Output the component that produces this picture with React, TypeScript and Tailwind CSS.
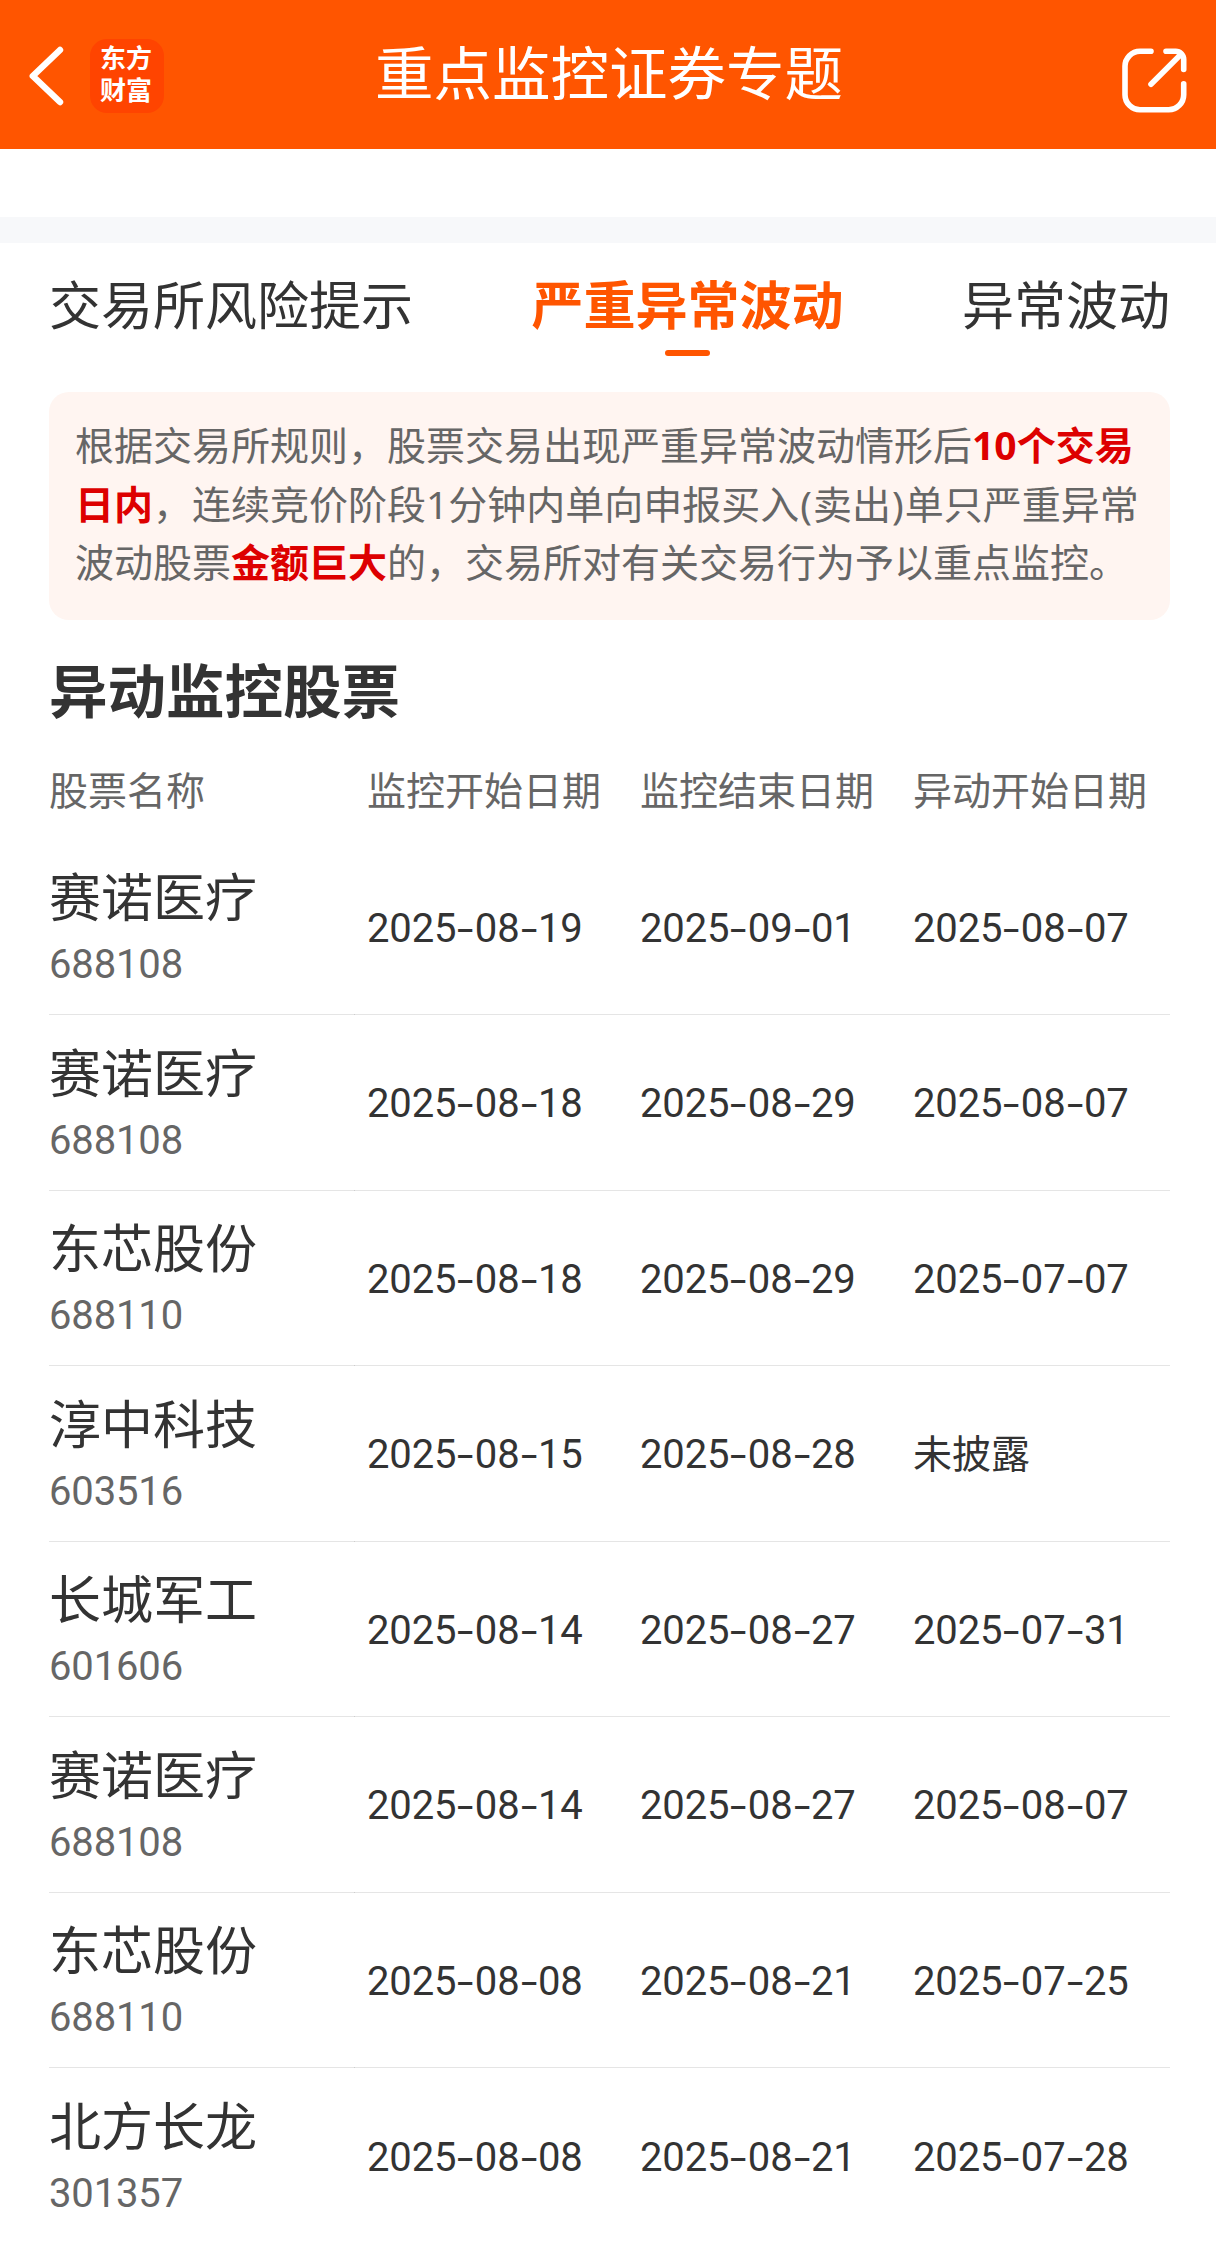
type Stock = {
  name: string;
  code: string;
  start: string;
  end: string;
  moved: string;
};

const stocks: Stock[] = [
  { name: "赛诺医疗", code: "688108", start: "2025-08-19", end: "2025-09-01", moved: "2025-08-07" },
  { name: "赛诺医疗", code: "688108", start: "2025-08-18", end: "2025-08-29", moved: "2025-08-07" },
  { name: "东芯股份", code: "688110", start: "2025-08-18", end: "2025-08-29", moved: "2025-07-07" },
  { name: "淳中科技", code: "603516", start: "2025-08-15", end: "2025-08-28", moved: "未披露" },
  { name: "长城军工", code: "601606", start: "2025-08-14", end: "2025-08-27", moved: "2025-07-31" },
  { name: "赛诺医疗", code: "688108", start: "2025-08-14", end: "2025-08-27", moved: "2025-08-07" },
  { name: "东芯股份", code: "688110", start: "2025-08-08", end: "2025-08-21", moved: "2025-07-25" },
  { name: "北方长龙", code: "301357", start: "2025-08-08", end: "2025-08-21", moved: "2025-07-28" },
];

const tabs = ["交易所风险提示", "严重异常波动", "异常波动"];
const activeTab = 1;

const Header = () => (
  <header className="flex h-[149px] items-start bg-[#ff5500] text-white">
    <svg className="ml-[26px] mt-[44px] h-16 w-10 shrink-0" viewBox="26 44 40 64" fill="none" stroke="currentColor" strokeWidth="6.4" strokeLinecap="round" strokeLinejoin="round">
      <path d="M60 50 32.8 76 60 102" />
    </svg>
    <div className="ml-6 mt-[39px] flex h-[74px] w-[74px] shrink-0 flex-col items-center rounded-[17px] bg-[#ff4400] pr-0.5 pt-[3px] text-[26px] font-bold leading-8">
      <span>东方</span>
      <span>财富</span>
    </div>
    <h1 className="mt-[36px] flex-1 pl-[211px] text-[58.5px] font-normal leading-[72px]">重点监控证券专题</h1>
    <svg className="mr-[26px] mt-[45px] h-[70px] w-[70px] shrink-0" viewBox="1120 45 70 70" fill="none" stroke="currentColor" strokeWidth="5.6" strokeLinecap="round">
      <path d="M1151 51.3h-11a15 15 0 0 0-15 15v28.4a15 15 0 0 0 15 15h28.7a15 15 0 0 0 15-15V83.8" />
      <path d="M1166 51.3h9.7a8 8 0 0 1 8 8v10.2" />
      <path d="M1151 84.3 1181 54.3" />
    </svg>
  </header>
);

const Tabs = () => (
  <nav className="flex h-[149px] justify-between pl-[49px] pr-[46px] pt-[36px]">
    {tabs.map((tab, i) => (
      <div key={tab} className="flex flex-col items-center text-[52px] leading-[52px]">
        <span className={i === activeTab ? "font-bold text-[#ff5500]" : ""}>{tab}</span>
        {i === activeTab && <i className="mt-[19px] h-[6px] w-[45px] rounded-full bg-[#ff5500]" />}
      </div>
    ))}
  </nav>
);

const Notice = () => (
  <p className="ml-[49px] mr-[46px] h-[228px] whitespace-nowrap rounded-[20px] bg-[#fff5f1] pl-[26px] pt-[24px] text-[39px] leading-[58.5px] text-[#666]">
    根据交易所规则，股票交易出现严重异常波动情形后<b className="text-[#dd0000]">10个交易</b>
    <br />
    <b className="text-[#dd0000]">日内</b>，连续竞价阶段1分钟内单向申报买入<span className="px-px">(</span>卖出<span className="px-px">)</span>单只严重异常
    <br />
    波动股票<b className="text-[#dd0000]">金额巨大</b>的，交易所对有关交易行为予以重点监控。
  </p>
);

// Hyphens are widened so they sit evenly between the digit groups
const DateText = ({ value }: { value: string }) => {
  if (!value.includes("-")) return <span>{value}</span>;
  return (
    <span className="whitespace-nowrap pt-[3px]">
      {value.split("-").map((part, i) => (
        <span key={i}>
          {i > 0 && <span className="inline-block w-[18.5px] -translate-y-px scale-x-150 text-center font-['Noto_Sans']">-</span>}
          <span className="font-['Roboto'] text-[40px] tracking-[-0.15px]">{part}</span>
        </span>
      ))}
    </span>
  );
};

const Row = ({ stock, last }: { stock: Stock; last: boolean }) => {
  const line = last ? "" : "border-b border-black/10";
  return (
    <div className="flex h-[175.5px] text-[39px]">
      <div className={`-mr-px w-[306px] pt-[21.5px] ${line}`}>
        <div className="text-[52px] leading-[72px]">{stock.name}</div>
        <div className="font-['Roboto'] text-[40px] leading-[63px] tracking-[-0.15px] text-[#666]">{stock.code}</div>
      </div>
      <div className={`flex w-[273px] items-center pl-[13px] ${line}`}><DateText value={stock.start} /></div>
      <div className={`flex w-[273px] items-center pl-[13px] ${line}`}><DateText value={stock.end} /></div>
      <div className={`flex flex-1 items-center pl-[13px] ${line}`}><DateText value={stock.moved} /></div>
    </div>
  );
};

export default function App() {
  return (
    <div className="h-[2248px] w-[1216px] overflow-hidden bg-white font-['Noto_Sans','Noto_Sans_CJK_SC',sans-serif] text-[#333]">
      <Header />
      <div className="mt-[68px] h-[26px] bg-[#f7f8fa]" />
      <Tabs />
      <Notice />
      <main className="pl-[49px] pr-[46px]">
        <h2 className="-mt-px text-[58.5px] font-bold leading-[142px]">异动监控股票</h2>
        <div className="flex h-[78.5px] text-[39px] leading-[57px] text-[#666]">
          <div className="w-[318px]">股票名称</div>
          <div className="w-[273px]">监控开始日期</div>
          <div className="w-[273px]">监控结束日期</div>
          <div className="flex-1 whitespace-nowrap">异动开始日期</div>
        </div>
        {stocks.map((stock, i) => (
          <Row key={i} stock={stock} last={i === stocks.length - 1} />
        ))}
      </main>
    </div>
  );
}
